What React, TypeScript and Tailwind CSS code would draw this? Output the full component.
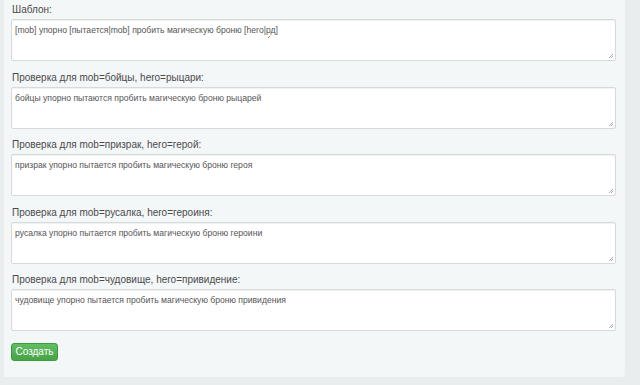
import React from "react";

const checks = [
  { label: "Проверка для mob=бойцы, hero=рыцари:", value: "бойцы упорно пытаются пробить магическую броню рыцарей" },
  { label: "Проверка для mob=призрак, hero=герой:", value: "призрак упорно пытается пробить магическую броню героя" },
  { label: "Проверка для mob=русалка, hero=героиня:", value: "русалка упорно пытается пробить магическую броню героини" },
  { label: "Проверка для mob=чудовище, hero=привидение:", value: "чудовище упорно пытается пробить магическую броню привидения" },
];

const Field: React.FC<{ label: string; children: React.ReactNode }> = ({ label, children }) => (
  <div className="flex flex-col">
    <label className="h-[19px] pl-[1px] pt-[4px] text-[10px] leading-[12px] text-[#4a4a4a]">{label}</label>
    <div className="relative h-[42px] w-[605px] rounded-[2px] border border-[#d6dadb] bg-white px-[3px] pt-[5px] text-[8.6px] leading-[11px] text-[#555] shadow-[inset_0_1px_1px_rgba(0,0,0,0.06)]">
      {children}
      <svg className="absolute bottom-[1px] right-[1px]" width="6" height="6" viewBox="0 0 6 6">
        <path d="M5 1L1 5M5 3L3 5" stroke="#999" strokeWidth="0.8" />
      </svg>
    </div>
  </div>
);

export default function App() {
  return (
    <div className="h-[385px] w-[640px] bg-[#e9eded] font-['Liberation_Sans',Arial,sans-serif]">
      <div className="ml-[4px] flex h-[377px] w-[621px] flex-col rounded-br-[4px] bg-[#f4f7f8] pl-[7px]">
        <div className="flex flex-col gap-[6.5px]">
          <Field label="Шаблон:">
            [mob] упорно [пытается|mob] пробить магическую броню [hero|
            <span className="underline decoration-red-500 decoration-wavy">рд</span>]
          </Field>
          {checks.map((c) => (
            <Field key={c.label} label={c.label}>
              {c.value}
            </Field>
          ))}
        </div>
        <button className="mt-[12px] h-[18px] w-[47px] rounded-[3px] border border-[#3e9a3e] bg-gradient-to-b from-[#62bd62] to-[#45a445] text-[10px] leading-[16px] text-white">
          Создать
        </button>
      </div>
    </div>
  );
}
